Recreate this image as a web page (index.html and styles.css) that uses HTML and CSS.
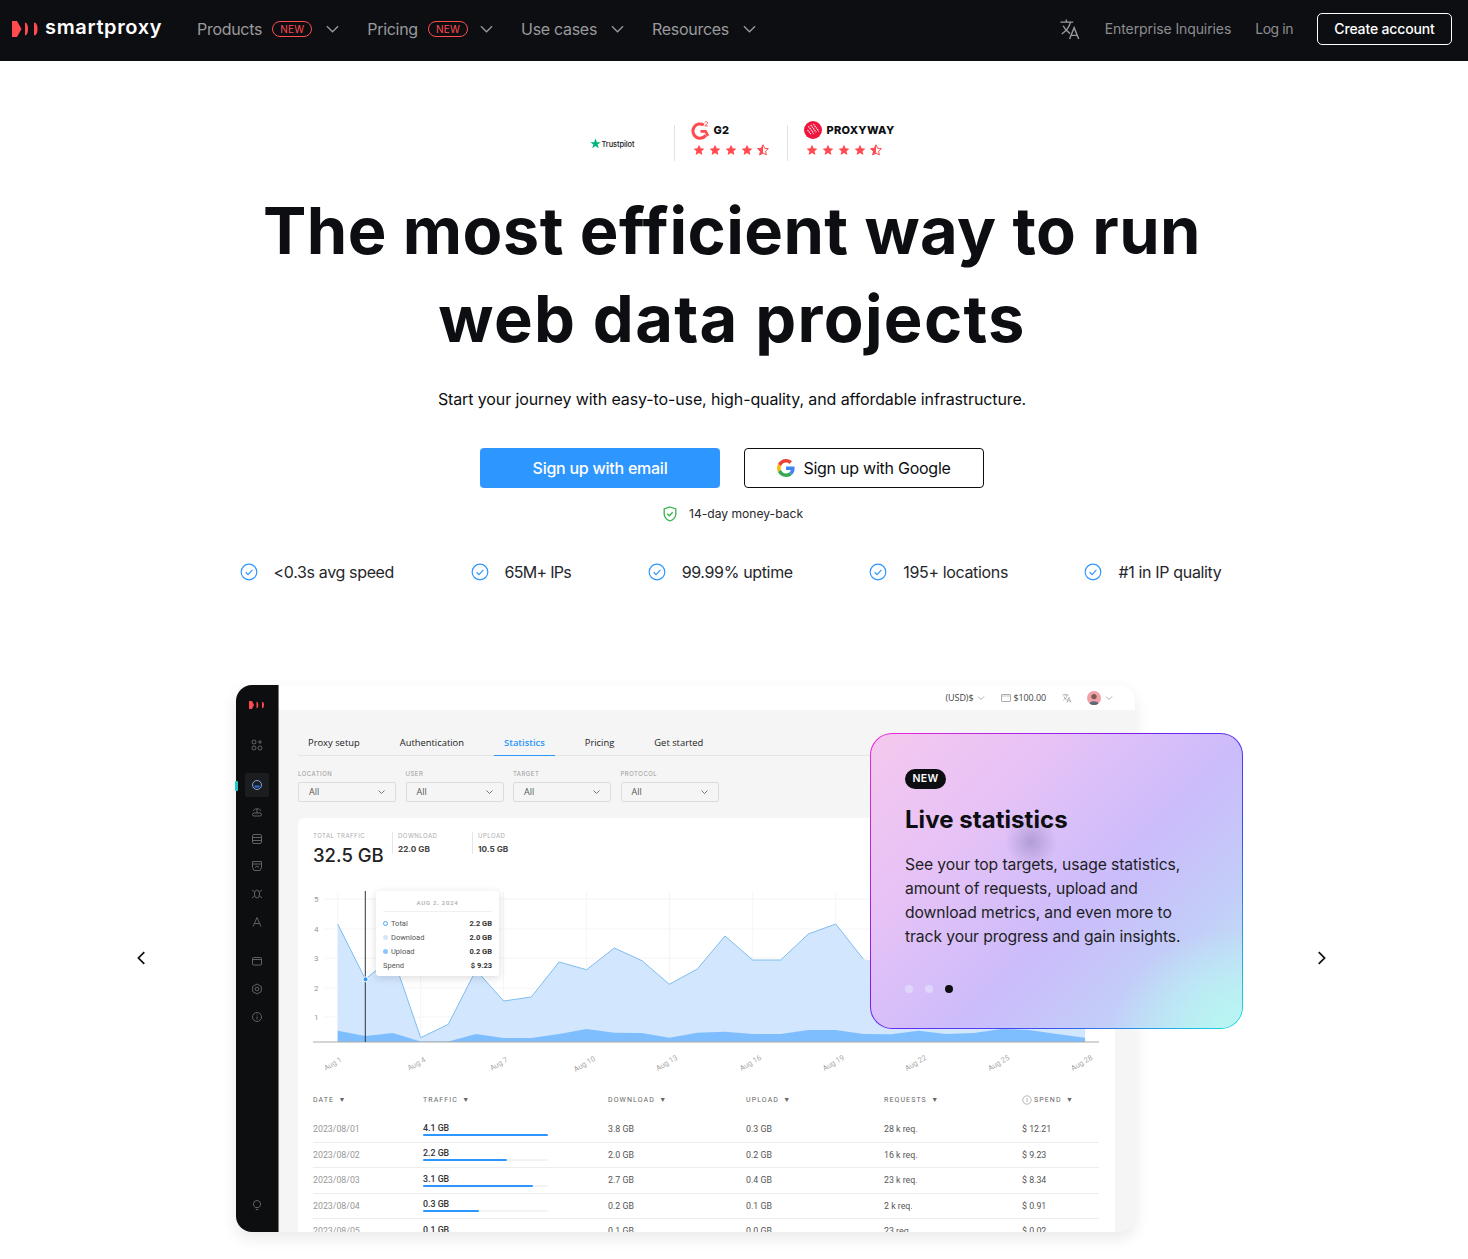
FILE: index.html
```html
<!DOCTYPE html>
<html lang="en">
<head>
<meta charset="utf-8">
<title>Smartproxy</title>
<link rel="stylesheet" href="styles.css">
</head>
<body>
<svg class="defs" width="0" height="0" aria-hidden="true">
  <symbol id="chev" viewBox="0 0 14 8"><path d="M1 1l6 6 6-6" fill="none" stroke="currentColor" stroke-width="1.4"/></symbol>
  <symbol id="star" viewBox="0 0 24 24"><path d="M12 1.5l3.2 7 7.6.8-5.7 5.1 1.6 7.5L12 18.1l-6.700 3.800 1.600-7.500L1.200 9.300l7.600-.8z" fill="#ff4a4f"/></symbol>
  <symbol id="halfstar" viewBox="0 0 24 24"><path d="M12 1.500l3.200 7 7.600.8-5.700 5.100 1.600 7.500L12 18.100l-6.700 3.800 1.600-7.500L1.200 9.300l7.600-.8z" fill="none" stroke="#ff4a4f" stroke-width="2"/><path d="M12 1.500v16.600l-6.700 3.800 1.600-7.500L1.200 9.300l7.600-.8z" fill="#ff4a4f"/></symbol>
  <symbol id="check" viewBox="0 0 20 20"><circle cx="10" cy="10" r="8.700" fill="none" stroke="#2d96ff" stroke-width="1.300"/><path d="M6.300 10.300l2.600 2.600 4.900-5.200" fill="none" stroke="#2d96ff" stroke-width="1.300"/></symbol>
  <symbol id="trans" viewBox="0 0 24 24"><path d="M1.500 4.500h14M8 1.500v3M12.500 4.500c-1 4.500-4.500 9.500-9.500 13M4.500 8.500c1.500 3.300 4 6 7.500 8.500M11.500 23l5-12.500 5 12.500M13.200 19h6.600" fill="none" stroke="currentColor" stroke-width="1.500"/></symbol>
</svg>

<header class="nav">
  <a class="brand">
    <svg class="brand-mark" viewBox="0 0 26 16"><path d="M0 0h5l4.500 8L5 16H0z" fill="#ff4a4f"/><path d="M13 1.500c2 0 3 3 3 6.500s-1 6.500-3 6.500z" fill="#ff4a4f"/><path d="M22 1.500c2.500 0 3.500 3 3.500 6.500S24.500 14.500 22 14.500z" fill="#ff4a4f"/></svg>
    <span>smartproxy</span>
  </a>
  <nav class="menu">
    <a class="menu-item">Products <span class="new">NEW</span><svg class="chev"><use href="#chev"/></svg></a>
    <a class="menu-item">Pricing <span class="new">NEW</span><svg class="chev chev-tight"><use href="#chev"/></svg></a>
    <a class="menu-item">Use cases<svg class="chev"><use href="#chev"/></svg></a>
    <a class="menu-item">Resources<svg class="chev"><use href="#chev"/></svg></a>
  </nav>
  <div class="nav-right">
    <svg class="nav-trans"><use href="#trans"/></svg>
    <a class="nav-link">Enterprise Inquiries</a>
    <a class="nav-link nav-login">Log in</a>
    <a class="nav-cta">Create account</a>
  </div>
</header>

<main class="hero">
  <div class="ratings">
    <div class="rate rate-tp">
      <svg class="tp-star" viewBox="0 0 24 24"><path d="M12 1l3 8h8.500l-6.900 5 2.700 8.500L12 17.200l-7.300 5.300 2.700-8.500-6.900-5H9z" fill="#00b67a"/></svg>
      <span>Trustpilot</span>
    </div>
    <div class="rate rate-g2">
      <div class="rate-head">
        <svg class="g2-logo" viewBox="0 0 20 20"><path d="M13.500 4.200A7.500 7.500 0 1 0 15.600 15" fill="none" stroke="#ff4a4f" stroke-width="3.200"/><path d="M10 11h5.300l2.700 4.700" fill="none" stroke="#ff4a4f" stroke-width="2.800"/><path d="M14.500 1.200c1-1 3-.6 3 .8 0 1-2 2-3 3.200h3.200" fill="none" stroke="#ff4a4f" stroke-width="1"/></svg>
        <b>G2</b>
      </div>
      <div class="stars"><svg><use href="#star"/></svg><svg><use href="#star"/></svg><svg><use href="#star"/></svg><svg><use href="#star"/></svg><svg><use href="#halfstar"/></svg></div>
    </div>
    <div class="rate rate-pw">
      <div class="rate-head">
        <svg class="pw-logo" viewBox="0 0 20 20"><circle cx="10" cy="10" r="10" fill="#f0173f"/><path d="M5 6l6 8M7.500 4.500l6 8M10.500 3.500l6 8M4 10l4 5" stroke="#fff" stroke-width="1.200" stroke-dasharray="1.500 .8"/></svg>
        <b>PROXYWAY</b>
      </div>
      <div class="stars"><svg><use href="#star"/></svg><svg><use href="#star"/></svg><svg><use href="#star"/></svg><svg><use href="#star"/></svg><svg><use href="#halfstar"/></svg></div>
    </div>
  </div>

  <h1>The most efficient way to run<br><span class="h1-second">web data projects</span></h1>
  <p class="lead">Start your journey with easy-to-use, high-quality, and affordable infrastructure.</p>

  <div class="cta-row">
    <a class="btn btn-blue">Sign up with email</a>
    <a class="btn btn-outline">
      <svg class="g-icon" viewBox="0 0 48 48"><path fill="#ea4335" d="M24 9.500c3.500 0 6.700 1.300 9.100 3.500l6.800-6.800C35.800 2.400 30.300 0 24 0 14.600 0 6.500 5.400 2.600 13.200l7.900 6.200C12.400 13.600 17.700 9.500 24 9.500z"/><path fill="#4285f4" d="M47 24.500c0-1.600-.1-3.100-.4-4.500H24v9h12.900c-.6 3-2.200 5.500-4.700 7.200l7.600 5.900C44.200 38 47 31.900 47 24.500z"/><path fill="#fbbc05" d="M10.500 28.600c-.5-1.400-.8-3-.8-4.600s.3-3.200.8-4.600l-7.900-6.200C.9 16.500 0 20.100 0 24s.9 7.500 2.600 10.800z"/><path fill="#34a853" d="M24 48c6.500 0 11.900-2.100 15.800-5.900l-7.600-5.900c-2.100 1.400-4.900 2.300-8.200 2.300-6.300 0-11.600-4.200-13.500-9.900l-7.900 6.200C6.500 42.600 14.600 48 24 48z"/></svg>
      Sign up with Google
    </a>
  </div>

  <div class="money">
    <svg class="shield" viewBox="0 0 14 16"><path d="M7 1l5.800 2v5c0 3.300-2.500 5.700-5.800 7-3.300-1.300-5.800-3.700-5.800-7V3z" fill="none" stroke="#35b24a" stroke-width="1.300"/><path d="M4.300 7.800l2 2 3.400-3.500" fill="none" stroke="#35b24a" stroke-width="1.300"/></svg>
    <span>14-day money-back</span>
  </div>

  <ul class="features">
    <li><svg><use href="#check"/></svg>&lt;0.3s avg speed</li>
    <li class="feat-narrow"><svg><use href="#check"/></svg>65M+ IPs</li>
    <li><svg><use href="#check"/></svg>99.99% uptime</li>
    <li><svg><use href="#check"/></svg>195+ locations</li>
    <li><svg><use href="#check"/></svg>#1 in IP quality</li>
  </ul>

  <section class="stage">
    <button class="arrow" aria-label="Previous"><svg viewBox="0 0 8 12"><path d="M6.800 1L1.800 6l5 5" fill="none" stroke="#111" stroke-width="1.500"/></svg></button>

    <div class="shot">
      <div class="dash">
        <aside class="side">
          <svg class="side-logo" viewBox="0 0 16 8"><path d="M0 0h3l2 4-2 4H0z" fill="#ff4a4f"/><path d="M7.500 .7c1.200 0 1.800 1.500 1.800 3.300S8.700 7.300 7.500 7.300z" fill="#ff4a4f"/><path d="M13 .7c1.400 0 2 1.500 2 3.300s-.6 3.300-2 3.300z" fill="#ff4a4f"/></svg>
          <div class="side-ico ico-first"><svg viewBox="0 0 12 12"><circle cx="3" cy="3" r="2"/><circle cx="3" cy="9" r="2"/><circle cx="9" cy="9" r="2"/><path d="M9 1v4M7 3h4"/></svg></div>
          <div class="side-ico is-active"><svg viewBox="0 0 12 12"><circle cx="6" cy="6" r="4.500" stroke="#8fb3ea"/><path d="M3.500 7.500h5" stroke="#2d6fe0" stroke-width="2"/></svg></div>
          <div class="side-ico"><svg viewBox="0 0 12 12"><path d="M2 5c1-3 7-3 8 0M6 3v4"/><rect x="1.500" y="7" width="9" height="3" rx="1.500"/></svg></div>
          <div class="side-ico"><svg viewBox="0 0 12 12"><rect x="1.500" y="1.500" width="9" height="9" rx="1.500"/><path d="M1.500 4.500h9M1.500 7.500h9"/></svg></div>
          <div class="side-ico"><svg viewBox="0 0 12 12"><path d="M1.500 1.500h9v6l-1.500 3h-6l-1.500-3z"/><path d="M1.500 4h9M4 7.500l2-1.500 2 1.500"/></svg></div>
          <div class="side-ico ico-tight"><svg viewBox="0 0 12 12"><ellipse cx="6" cy="6" rx="2.600" ry="4"/><path d="M1 2l2.500 2M11 2L8.500 4M1 10l2.500-2M11 10L8.500 8"/></svg></div>
          <div class="side-ico ico-tight"><svg viewBox="0 0 12 12"><path d="M2 10.500L6 1.500l4 9M3.500 7.500h5"/></svg></div>
          <div class="side-ico ico-group"><svg viewBox="0 0 12 12"><rect x="1.500" y="2.500" width="9" height="7.500" rx="1"/><path d="M1.500 4.500h9"/></svg></div>
          <div class="side-ico ico-tight"><svg viewBox="0 0 12 12"><circle cx="6" cy="6" r="1.800"/><path d="M6 1l4.300 2.500v5L6 11 1.700 8.500v-5z"/></svg></div>
          <div class="side-ico ico-tight"><svg viewBox="0 0 12 12"><circle cx="6" cy="6" r="4.500"/><path d="M6 5.500v3M6 3.300v1"/></svg></div>
          <div class="side-ico ico-bottom"><svg viewBox="0 0 12 12"><path d="M4.300 8.500C3 7.500 2.500 6.500 2.500 5a3.500 3.500 0 0 1 7 0c0 1.500-.5 2.500-1.800 3.500zM4.800 10.500h2.400"/></svg></div>
        </aside>

        <div class="dash-main">
          <div class="topbar">
            <span class="tb-item">(USD)$</span><svg class="tb-chev"><use href="#chev"/></svg>
            <svg class="tb-wallet" viewBox="0 0 10 8"><rect x=".5" y=".5" width="9" height="7" rx=".6" fill="none" stroke="#888" stroke-width=".7"/><path d="M.5 2h9" stroke="#888" stroke-width=".5"/></svg>
            <span class="tb-item tb-money">$100.00</span>
            <svg class="tb-trans"><use href="#trans"/></svg>
            <svg class="tb-avatar" viewBox="0 0 14 14"><circle cx="7" cy="7" r="7" fill="#f0a0a8"/><circle cx="7" cy="5.600" r="2.700" fill="#7d5d52"/><path d="M2.500 12.500c1-3 8-3 9 0a7 7 0 0 1-9 0z" fill="#5f6a78"/></svg>
            <svg class="tb-chev tb-chev-last"><use href="#chev"/></svg>
          </div>

          <div class="content">
            <div class="tabs">
              <span class="tab">Proxy setup</span>
              <span class="tab">Authentication</span>
              <span class="tab tab-on">Statistics</span>
              <span class="tab">Pricing</span>
              <span class="tab">Get started</span>
            </div>

            <div class="filters">
              <label class="filter"><span>LOCATION</span><div class="select">All<svg class="sel-chev"><use href="#chev"/></svg></div></label>
              <label class="filter"><span>USER</span><div class="select">All<svg class="sel-chev"><use href="#chev"/></svg></div></label>
              <label class="filter"><span>TARGET</span><div class="select">All<svg class="sel-chev"><use href="#chev"/></svg></div></label>
              <label class="filter"><span>PROTOCOL</span><div class="select">All<svg class="sel-chev"><use href="#chev"/></svg></div></label>
            </div>

            <div class="panel">
              <div class="stats">
                <div class="stat stat-total"><span class="stat-label">TOTAL TRAFFIC</span><strong>32.5 GB</strong></div>
                <div class="stat stat-sub"><span class="stat-label">DOWNLOAD</span><b>22.0 GB</b></div>
                <div class="stat stat-sub"><span class="stat-label">UPLOAD</span><b>10.5 GB</b></div>
              </div>

              <div class="chart">
                <svg class="chart-svg" viewBox="298 880 817 200">
                  <g class="grid">
                    <path d="M325 899H1099M325 929H1099M325 958H1099M325 988H1099M325 1017H1099"/>
                    <path d="M337.700 892V1042M420.700 892V1042M503.600 892V1042M586.600 892V1042M669.300 892V1042M752.700 892V1042M835.700 892V1042M918.600 892V1042M1001.600 892V1042M1085 892V1042"/>
                  </g>
                  <path class="area" d="M337.700 924L365.300 979L393 957L420.700 1037.700L448.300 1024.300L476 970L503.600 1001L531.300 997L559 962L586.600 969.700L614.300 948L642 960.700L669.300 984.300L697.300 969L725 936L752.700 960L780.700 960L808.300 934L835.700 924L863.300 959L891 965L918.600 950L946 970L974 960L1001.600 945L1029 975L1057 960L1085 985V1042H337.700Z"/>
                  <path class="area-line" d="M337.700 924L365.300 979L393 957L420.700 1037.700L448.300 1024.300L476 970L503.600 1001L531.300 997L559 962L586.600 969.700L614.300 948L642 960.700L669.300 984.300L697.300 969L725 936L752.700 960L780.700 960L808.300 934L835.700 924L863.300 959"/>
                  <path class="area-up" d="M337.700 1030.700L365.300 1036L393 1033L420.700 1041.500L448.300 1041.500L476 1034L503.600 1038L531.300 1038L559 1034L586.600 1029L614.300 1032.700L642 1033L669.300 1037.700L697.300 1032.700L725 1031.700L752.700 1034L780.700 1034L808.300 1030L835.700 1030L863.300 1034L891 1034.300L918.600 1030.700L946 1034L974 1033L1001.600 1029L1029 1030L1057 1034L1085 1037.700V1042H337.700Z"/>
                  <path class="axis" d="M313 1042H1099"/>
                  <path class="cursor" d="M365.300 891V1042"/>
                  <circle class="dot" cx="365.500" cy="979.300" r="2.500"/>
                  <g class="ylab"><text x="314" y="902">5</text><text x="314" y="932">4</text><text x="314" y="961">3</text><text x="314" y="991">2</text><text x="314" y="1020">1</text></g>
                  <g class="xlab">
                    <text transform="translate(334 1066) rotate(-30)">Aug 1</text>
                    <text transform="translate(417.700 1066) rotate(-30)">Aug 4</text>
                    <text transform="translate(500 1066) rotate(-30)">Aug 7</text>
                    <text transform="translate(585.700 1066) rotate(-30)">Aug 10</text>
                    <text transform="translate(668 1065) rotate(-30)">Aug 13</text>
                    <text transform="translate(751.700 1065) rotate(-30)">Aug 16</text>
                    <text transform="translate(834.700 1065) rotate(-30)">Aug 19</text>
                    <text transform="translate(917 1065) rotate(-30)">Aug 22</text>
                    <text transform="translate(1000 1065) rotate(-30)">Aug 25</text>
                    <text transform="translate(1083 1065) rotate(-30)">Aug 28</text>
                  </g>
                </svg>
                <div class="tip">
                  <div class="tip-date">AUG 2, 2024</div>
                  <div class="tip-row"><i class="mark mark-total"></i><span>Total</span><b>2.2 GB</b></div>
                  <div class="tip-row"><i class="mark mark-down"></i><span>Download</span><b>2.0 GB</b></div>
                  <div class="tip-row"><i class="mark mark-up"></i><span>Upload</span><b>0.2 GB</b></div>
                  <div class="tip-row"><span>Spend</span><b>$ 9.23</b></div>
                </div>
              </div>

              <div class="table">
                <div class="tr th">
                  <span>DATE ▼</span><span>TRAFFIC ▼</span><span>DOWNLOAD ▼</span><span>UPLOAD ▼</span><span>REQUESTS ▼</span>
                  <span class="th-spend"><svg viewBox="0 0 10 10"><circle cx="5" cy="5" r="4.200" fill="none" stroke="#888" stroke-width=".6"/><path d="M5 3v4" stroke="#888" stroke-width=".6"/></svg>SPEND ▼</span>
                </div>
                <div class="tr"><span class="date">2023/08/01</span><div class="traffic"><b>4.1 GB</b><div class="track"><div class="fill" style="width:100%"></div></div></div><span>3.8 GB</span><span>0.3 GB</span><span>28 k req.</span><span>$ 12.21</span></div>
                <div class="tr"><span class="date">2023/08/02</span><div class="traffic"><b>2.2 GB</b><div class="track"><div class="fill" style="width:67%"></div></div></div><span>2.0 GB</span><span>0.2 GB</span><span>16 k req.</span><span>$ 9.23</span></div>
                <div class="tr"><span class="date">2023/08/03</span><div class="traffic"><b>3.1 GB</b><div class="track"><div class="fill" style="width:88%"></div></div></div><span>2.7 GB</span><span>0.4 GB</span><span>23 k req.</span><span>$ 8.34</span></div>
                <div class="tr"><span class="date">2023/08/04</span><div class="traffic"><b>0.3 GB</b><div class="track"><div class="fill" style="width:45%"></div></div></div><span>0.2 GB</span><span>0.1 GB</span><span>2 k req.</span><span>$ 0.91</span></div>
                <div class="tr"><span class="date">2023/08/05</span><div class="traffic"><b>0.1 GB</b><div class="track"><div class="fill" style="width:10%"></div></div></div><span>0.1 GB</span><span>0.0 GB</span><span>23 req.</span><span>$ 0.02</span></div>
              </div>
            </div>
          </div>
        </div>
      </div>
      <span class="side-marker"></span>

      <article class="promo">
        <span class="promo-tag">NEW</span>
        <h2>Live statistics</h2>
        <p>See your top targets, usage statistics, amount of requests, upload and download metrics, and even more to track your progress and gain insights.</p>
        <div class="dots"><i></i><i></i><i class="on"></i></div>
      </article>
    </div>

    <button class="arrow" aria-label="Next"><svg viewBox="0 0 8 12"><path d="M1.200 1l5 5-5 5" fill="none" stroke="#111" stroke-width="1.500"/></svg></button>
  </section>
</main>
</body>
</html>
```
FILE: styles.css
```css
* { box-sizing: border-box; }
html, body { margin: 0; padding: 0; }
body {
  font-family: "Inter", "Liberation Sans", sans-serif;
  color: #0d0e12;
  background: #fff;
  overflow-x: hidden;
}
.defs { position: absolute; }

/* Nav */
.nav {
  height: 61px;
  background: #0d0e12;
  display: flex;
  align-items: center;
  padding: 0 16px 4px 12px;
}
.brand { display: flex; align-items: center; gap: 7px; color: #fff; width: 185px; }
.brand-mark { width: 26px; height: 16px; margin-top: 1px; }
.brand span { font-size: 20px; font-weight: 600; letter-spacing: .65px; line-height: 24px; margin-top: -3px; }
.menu { display: flex; align-items: center; gap: 28px; }
.menu-item {
  display: flex; align-items: center; color: #9a9a9c; font-size: 16px; letter-spacing: -.3px;
  white-space: pre;
}
.new {
  border: 1px solid #ff4a4f; border-radius: 8px; color: #ff4a4f; font-size: 10px;
  line-height: 14px; width: 40px; text-align: center; margin-left: 6px; letter-spacing: .3px;
}
.chev { width: 13px; height: 8px; margin-left: 14px; color: #9a9a9c; }
.chev-tight { margin-left: 12px; }
.nav-right { margin-left: auto; display: flex; align-items: center; }
.nav-trans { width: 22px; height: 22px; color: #9a9a9c; margin-right: 24px; }
.nav-link { color: #8d8d90; font-size: 14px; margin-right: 24px; letter-spacing: -.1px; }
.nav-login { letter-spacing: -.45px; }
.nav-cta {
  width: 135px; height: 32px; border: 1px solid #fff; border-radius: 5px; color: #fff;
  font-size: 14px; font-weight: 500; display: flex; align-items: center; justify-content: center;
  letter-spacing: -.15px;
}

/* Hero */
.hero { display: flex; flex-direction: column; align-items: center; padding: 59px 4px 0 0; }
.ratings { display: flex; height: 41px; margin-left: 4px; }
.rate { display: flex; }
.rate-tp {
  width: 100px; padding: 20px 0 0 16px; align-items: flex-start; gap: 1px;
  font-size: 7.500px; font-weight: 500; color: #222; line-height: 9px; letter-spacing: -.1px;
}
.tp-star { width: 11px; height: 11px; margin-top: -2px; flex: none; }
.rate-g2, .rate-pw { flex-direction: column; border-left: 1px solid #e2e2e2; margin-top: 5px; height: 36px; padding-left: 16px; }
.rate-g2 { width: 113px; }
.rate-head { display: flex; align-items: center; margin-top: -6px; height: 22px; }
.rate-head b { font-size: 11px; font-weight: 800; letter-spacing: .3px; }
.g2-logo { width: 19px; height: 19px; margin-right: 4px; }
.pw-logo { width: 18px; height: 18px; margin-right: 5px; }
.stars { display: flex; gap: 4px; margin: 3px 0 0 2px; }
.stars svg { width: 12px; height: 12px; }

h1 {
  margin: 26px 0 0; font-size: 65px; line-height: 88px; font-weight: 700; text-align: center;
  letter-spacing: .45px; white-space: nowrap;
}
.h1-second { letter-spacing: 1.300px; }
.lead { margin: 24px 0 0; font-size: 16px; line-height: 24px; letter-spacing: -.11px; }
.cta-row { display: flex; gap: 24px; margin-top: 37px; }
.btn {
  width: 240px; height: 40px; border-radius: 4px; display: flex; align-items: center; justify-content: center;
  font-size: 16px; gap: 8px; letter-spacing: -.25px;
}
.btn-blue { background: #2d96ff; color: #fff; font-weight: 500; }
.btn-outline { border: 1px solid #0d0e12; }
.g-icon { width: 18px; height: 18px; }
.money { display: flex; align-items: center; gap: 12px; margin-top: 17px; font-size: 12.100px; line-height: 18px; margin-left: 2px; color: #26272b; }
.shield { width: 14px; height: 16px; }
.features { list-style: none; display: flex; gap: 76.500px; margin: 37px 0 0 -3px; padding: 0; }
.features li { display: flex; align-items: center; gap: 16px; font-size: 16px; line-height: 24px; color: #26272b; letter-spacing: -.35px; white-space: nowrap; }
.features .feat-narrow { letter-spacing: -.7px; }
.features svg { width: 18px; height: 18px; }

/* Carousel */
.stage { display: flex; align-items: center; margin: 101px 0 0 136px; padding-bottom: 27px; align-self: flex-start; }
.arrow { width: 10px; height: 14px; padding: 0; border: 0; background: none; display: flex; margin-bottom: 1px; }
.arrow svg { width: 10px; height: 14px; }
.shot { position: relative; width: 899px; height: 547px; margin: 0 182px 0 90px; }
.dash {
  display: flex; height: 547px; width: 899px; overflow: hidden; border-radius: 16px;
  box-shadow: 0 6px 16px rgba(0,0,0,.09); background: #f5f5f5;
}
.side-marker { position: absolute; left: -1px; top: 96px; width: 3px; height: 10px; background: #1fc7d4; border-radius: 1px; }

/* Sidebar */
.side {
  width: 43px; flex: none; background: #0d0e10; border-right: 1px solid #7a7a7a;
  display: flex; flex-direction: column; align-items: center; padding-top: 16px;
}
.side-logo { width: 16px; height: 8px; flex: none; }
.side-ico { width: 24px; height: 24px; flex: none; display: flex; align-items: center; justify-content: center; margin-top: 3px; margin-right: 1px; border-radius: 2px; }
.side-ico svg { width: 12px; height: 12px; fill: none; stroke: #6b6b6f; stroke-width: .9; }
.ico-first { margin-top: 24px; }
.side-ico.is-active { background: #1c1d20; margin-top: 16px; }
.ico-group { margin-top: 15px; }
.ico-tight { margin-top: 4px; }
.ico-bottom { margin-top: auto; margin-bottom: 15px; }

/* Dashboard main */
.dash-main { flex: 1; min-width: 0; }
.topbar {
  height: 25px; background: #fff; display: flex; align-items: center; justify-content: flex-end;
  padding-right: 22px; font-size: 9px; color: #444; font-family: "Open Sans", sans-serif; letter-spacing: -.1px;
}
.tb-chev { width: 8px; height: 4px; color: #888; margin-left: 4px; }
.tb-wallet { width: 10px; height: 8px; margin-left: 16px; }
.tb-money { margin-left: 2px; }
.tb-trans { width: 10px; height: 10px; color: #888; margin-left: 16px; }
.tb-avatar { width: 14px; height: 14px; margin-left: 15px; }
.content { padding: 21px 20px 0 19px; }
.tabs { display: flex; gap: 20px; height: 25px; border-bottom: 1px solid #e4e4e4; }
.tab {
  padding: 0 10px; font-size: 9.400px; line-height: 24px; color: #222; height: 25px;
  font-family: "Open Sans", sans-serif; font-weight: 500; white-space: nowrap;
}
.tab-on { color: #2d96ff; border-bottom: 1px solid #2d96ff; font-weight: 600; }
.filters { display: flex; gap: 9.500px; margin-top: 14px; }
.filter { width: 98px; display: flex; flex-direction: column; gap: 4px; }
.filter span { font-size: 6px; line-height: 8px; letter-spacing: .5px; color: #999; }
.select {
  height: 20px; border: 1px solid #dcdcdc; border-radius: 2px; font-size: 9px; line-height: 18px; color: #555;
  padding: 0 10px; display: flex; justify-content: space-between; align-items: center; font-family: "Open Sans", sans-serif;
}
.sel-chev { width: 7px; height: 4px; color: #444; }
.panel { margin-top: 16px; background: #fff; border-radius: 6px 6px 0 0; padding: 14px 16px 0 15px; height: 420px; }
.stats { display: flex; height: 48px; }
.stat { display: flex; flex-direction: column; }
.stat-total { width: 79px; }
.stat-sub { width: 80px; border-left: 1px solid #e6e6e6; padding-left: 5px; height: 22px; }
.stat-label { font-size: 6px; line-height: 8px; letter-spacing: .5px; color: #aaa; }
.stat strong { font-size: 18.500px; line-height: 22px; font-weight: 500; margin-top: 4px; color: #222; white-space: nowrap; }
.stat b { font-size: 8.200px; line-height: 12px; margin-top: 3px; font-weight: 700; color: #444; }
.chart { position: relative; margin: 0 -16px 0 -15px; height: 200px; }
.chart-svg { display: block; width: 817px; height: 200px; }
.grid path { stroke: #f1f1f1; stroke-width: .8; fill: none; }
.area { fill: #d2e6fd; }
.area-line { fill: none; stroke: #7fbdf0; stroke-width: 1; }
.area-up { fill: #7fbefe; }
.axis { stroke: #a9a9a9; stroke-width: 1; }
.cursor { stroke: #2f3238; stroke-width: 1; }
.dot { fill: #2d96ff; stroke: #fff; stroke-width: 1; }
.ylab text { font-size: 8px; fill: #999; font-family: "Roboto", sans-serif; }
.xlab text { font-size: 7.500px; fill: #aaa; text-anchor: middle; font-family: "Roboto", sans-serif; }
.tip {
  position: absolute; left: 78px; top: 11px; width: 123px; height: 85px; background: #fff; border-radius: 3px;
  box-shadow: 0 2px 9px rgba(0,0,0,.14); padding: 6px 7px; font-family: "Roboto", sans-serif; font-size: 7.500px; color: #555;
}
.tip-date { font-size: 6px; letter-spacing: .8px; color: #aaa; text-align: center; padding-bottom: 4px; line-height: 11px; height: 15px; border-bottom: 1px solid #f0f0f0; margin-bottom: 4px; font-weight: 500; }
.tip-row { display: flex; align-items: center; height: 14px; }
.tip-row b { margin-left: auto; color: #333; font-weight: 700; }
.mark { width: 5px; height: 5px; border-radius: 50%; margin-right: 3px; }
.mark-total { border: 1px solid #4ea4f5; }
.mark-down { background: #d2e6fd; }
.mark-up { background: #8cc6fe; }
.table { margin-top: 11px; width: 786px; font-family: "Roboto", sans-serif; font-size: 8.800px; color: #555; }
.tr {
  display: grid; grid-template-columns: 110px 185px 138px 138px 138px 77px; align-items: center;
  height: 25.500px; border-bottom: 1px solid #ededed;
}
.th { height: 18px; border: 0; margin-bottom: 8px; font-size: 7px; letter-spacing: 1.100px; word-spacing: 1.500px; color: #666; }
.th-spend { display: flex; align-items: center; gap: 2px; }
.th-spend svg { width: 10px; height: 10px; }
.date { color: #999; }
.traffic { width: 125px; padding-top: 0; }
.traffic b { display: block; font-weight: 500; color: #333; line-height: 10px; }
.track { height: 2px; background: #f3f3f3; margin-top: 1px; border-radius: 1px; }
.fill { height: 2px; background: #2d96ff; border-radius: 1px; }

/* Promo */
.promo {
  position: absolute; left: 634px; top: 48px; width: 373px; height: 296px;
  border: 1px solid transparent; border-radius: 22px; padding: 35px 35px 0 34px;
  background:
    radial-gradient(circle 26px at 160px 108px, rgba(120,110,170,.42), rgba(120,110,170,0)) padding-box,
    radial-gradient(ellipse 130px 100px at 100% 100%, #b8f5f2 10%, rgba(184,245,242,0) 100%) padding-box,
    linear-gradient(135deg, #f5c9ee 0%, #e7c2f6 28%, #cbbcfb 58%, #c3cdf8 78%, #bdeaf5 100%) padding-box,
    linear-gradient(135deg, #ee2ad8 0%, #7a1df0 40%, #3a4cf0 70%, #16e0e0 100%) border-box;
}
.promo-tag {
  display: block; width: 41px; height: 20px; border-radius: 10px; background: #0d0e12; color: #fff;
  font-size: 10.500px; font-weight: 600; line-height: 20px; text-align: center; letter-spacing: .3px;
}
.promo h2 { margin: 16px 0 0; font-size: 24px; line-height: 30px; font-weight: 700; letter-spacing: .05px; }
.promo p { margin: 18px 0 0; font-size: 15.700px; line-height: 24px; width: 296px; color: #1d1e24; letter-spacing: -.1px; }
.dots { display: flex; gap: 12px; margin-top: 36px; padding-left: 0; }
.dots i { width: 8px; height: 8px; border-radius: 50%; background: #dfd6fb; }
.dots .on { background: #0d0e12; }
```
